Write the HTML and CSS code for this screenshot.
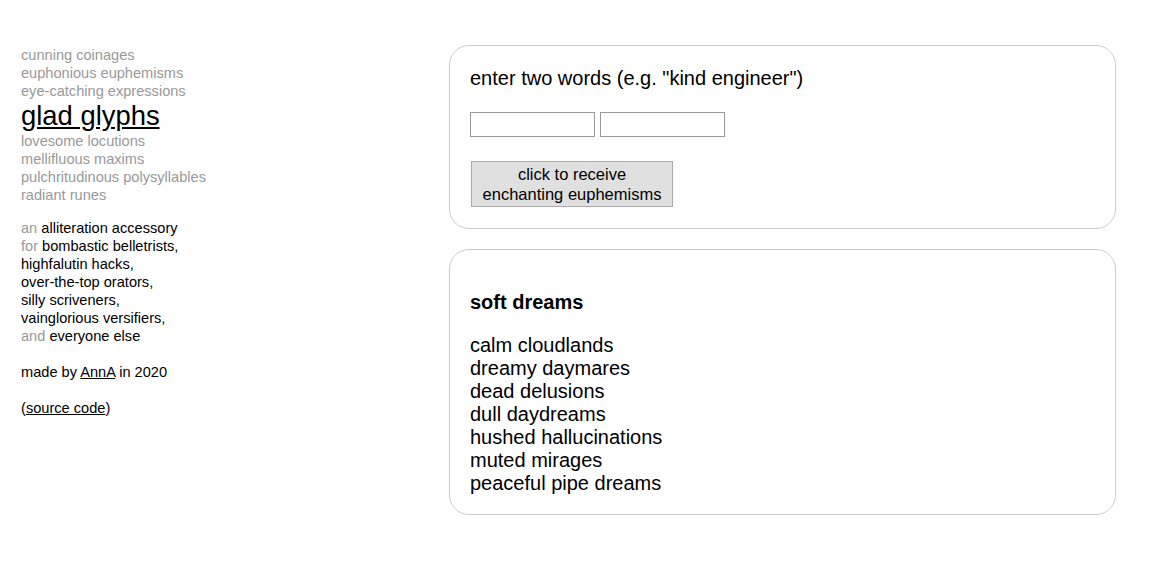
FILE: index.html
```html
<!DOCTYPE html>
<html>
<head>
<meta charset="utf-8">
<link rel="stylesheet" href="styles.css">
</head>
<body>
<div class="page">
  <nav class="sidebar">
    <ul class="sites">
      <li>cunning coinages</li>
      <li>euphonious euphemisms</li>
      <li>eye-catching expressions</li>
      <li class="current"><a href="#">glad glyphs</a></li>
      <li>lovesome locutions</li>
      <li>mellifluous maxims</li>
      <li>pulchritudinous polysyllables</li>
      <li>radiant runes</li>
    </ul>
    <p class="about">
      <span class="dim">an</span> alliteration accessory<br>
      <span class="dim">for</span> bombastic belletrists,<br>
      highfalutin hacks,<br>
      over-the-top orators,<br>
      silly scriveners,<br>
      vainglorious versifiers,<br>
      <span class="dim">and</span> everyone else
    </p>
    <p class="about">made by <a href="#">AnnA</a> in 2020</p>
    <p class="about">(<a href="#">source code</a>)</p>
  </nav>
  <main class="main">
    <section class="box form-box">
      <p class="prompt">enter two words (e.g. "kind engineer")</p>
      <div class="inputs">
        <input type="text" class="word">
        <input type="text" class="word">
      </div>
      <button class="go">click to receive<br>enchanting euphemisms</button>
    </section>
    <section class="box result-box">
      <h2 class="result-title">soft dreams</h2>
      <ul class="results">
        <li>calm cloudlands</li>
        <li>dreamy daymares</li>
        <li>dead delusions</li>
        <li>dull daydreams</li>
        <li>hushed hallucinations</li>
        <li>muted mirages</li>
        <li>peaceful pipe dreams</li>
      </ul>
    </section>
  </main>
</div>
</body>
</html>
```
FILE: styles.css
```css
html, body {
  margin: 0;
  padding: 0;
  background: #fff;
}
body {
  font-family: "Liberation Sans", Arial, sans-serif;
  color: #000;
}
.page {
  display: flex;
  padding: 45px 37px 0 21px;
}
.sidebar {
  flex: 0 0 428px;
  font-size: 14.6px;
  line-height: 18px;
  padding-top: 1px;
}
.sites {
  list-style: none;
  margin: 0;
  padding: 0;
  color: #999;
}
.sites .current {
  font-size: 27.4px;
  line-height: 32px;
}
.sites .current a {
  color: #000;
}
.about {
  margin: 15px 0 0 0;
}
.about + .about {
  margin-top: 18px;
}
.dim {
  color: #999;
}
a {
  color: #000;
  text-decoration: underline;
}
.main {
  flex: 1;
  display: flex;
  flex-direction: column;
  gap: 20px;
}
.box {
  border: 1px solid #ccc;
  border-radius: 20px;
  padding: 0 20px;
}
.form-box {
  padding-top: 21px;
  padding-bottom: 21px;
  height: 184px;
  box-sizing: border-box;
}
.prompt {
  margin: 0;
  font-size: 20px;
  line-height: 23px;
}
.inputs {
  display: flex;
  gap: 5px;
  margin-top: 22px;
}
.word {
  width: 125px;
  height: 25px;
  box-sizing: border-box;
  border: 1px solid #999;
  margin: 0;
  padding: 0 2px;
  font-family: inherit;
  font-size: 14px;
}
.go {
  display: block;
  margin: 24px 0 0 1px;
  width: 202px;
  height: 46px;
  box-sizing: border-box;
  background: #e0e0e0;
  border: 1px solid #aaa;
  border-radius: 0;
  font-family: inherit;
  font-size: 16.5px;
  line-height: 20px;
  color: #000;
  padding: 0;
}
.result-box {
  padding-top: 41px;
  padding-bottom: 20px;
  height: 266px;
  box-sizing: border-box;
}
.result-title {
  margin: 0;
  font-size: 20px;
  line-height: 23px;
  font-weight: bold;
}
.results {
  list-style: none;
  margin: 20px 0 0 0;
  padding: 0;
  font-size: 20px;
  line-height: 23px;
}
```
